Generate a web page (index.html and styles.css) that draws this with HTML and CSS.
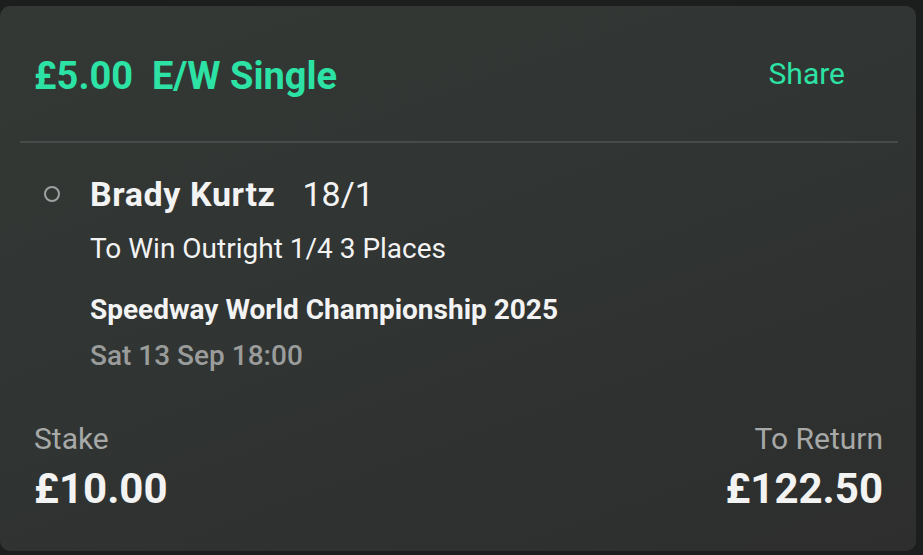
FILE: index.html
```html
<!DOCTYPE html>
<html lang="en">
<head>
    <meta charset="UTF-8">
    <meta name="viewport" content="width=device-width, initial-scale=1.0">
    <title>Bet Receipt</title>
    <link rel="stylesheet" href="styles.css">
</head>
<body>
    <div class="bet-card">
        <div class="bet-header">
            <h1 class="bet-title">£5.00&nbsp;&nbsp;E/W Single</h1>
            <a class="share-link" href="#">Share</a>
        </div>

        <div class="selection">
            <span class="status-dot"></span>
            <div class="selection-info">
                <div class="runner">
                    <span class="runner-name">Brady Kurtz</span>
                    <span class="runner-odds">18/1</span>
                </div>
                <div class="market">To Win Outright 1/4 3 Places</div>
                <div class="event">Speedway World Championship 2025</div>
                <div class="event-time">Sat 13 Sep 18:00</div>
            </div>
        </div>

        <div class="bet-footer">
            <div class="amount">
                <div class="amount-label">Stake</div>
                <div class="amount-value">£10.00</div>
            </div>
            <div class="amount amount-right">
                <div class="amount-label">To Return</div>
                <div class="amount-value">£122.50</div>
            </div>
        </div>
    </div>
</body>
</html>
```

FILE: styles.css
```css
html, body {
    height: 100%;
}

body {
    margin: 0;
    padding: 6px 7px 4px 0;
    box-sizing: border-box;
    background: #1c1d1d;
    font-family: Roboto, 'Liberation Sans', sans-serif;
    color: #f3f3f3;
}

.bet-card {
    height: 100%;
    box-sizing: border-box;
    padding: 0 18px 0 20px;
    border-radius: 10px;
    background: linear-gradient(160deg, #333835 0%, #303432 50%, #2d2e2d 100%);
}

/* header */
.bet-header {
    display: flex;
    justify-content: space-between;
    align-items: center;
    height: 137px;
    padding: 4px 53px 0 14px;
    box-sizing: border-box;
    border-bottom: 2px solid #474b49;
}

.bet-title {
    margin: 0;
    font-size: 38px;
    font-weight: 700;
    color: #2de2a5;
}

.share-link {
    margin-top: -4px;
    font-size: 30px;
    color: #2de2a5;
    text-decoration: none;
}

/* selection */
.selection {
    display: flex;
    align-items: flex-start;
    padding: 31px 0 0 24px;
}

.status-dot {
    flex: none;
    width: 12px;
    height: 12px;
    margin: 12px 30px 0 0;
    border: 2px solid #9ea19f;
    border-radius: 50%;
}

.runner {
    display: flex;
    align-items: baseline;
    gap: 27px;
    font-size: 34px;
    line-height: 40px;
}

.runner-name {
    font-weight: 700;
    letter-spacing: 0.6px;
}

.market {
    margin-top: 18px;
    font-size: 28px;
    line-height: 34px;
}

.event {
    margin-top: 28px;
    font-size: 28px;
    line-height: 32px;
    font-weight: 700;
}

.event-time {
    margin-top: 14px;
    font-size: 28px;
    line-height: 32px;
    font-weight: 500;
    color: #9a9c9b;
}

/* stake / return */
.bet-footer {
    display: flex;
    justify-content: space-between;
    padding: 49px 15px 0 14px;
}

.amount-right {
    text-align: right;
}

.amount-label {
    font-size: 30px;
    line-height: 35px;
    color: #a7a9a8;
}

.amount-value {
    margin-top: 8px;
    font-size: 42px;
    line-height: 49px;
    font-weight: 700;
}
```
